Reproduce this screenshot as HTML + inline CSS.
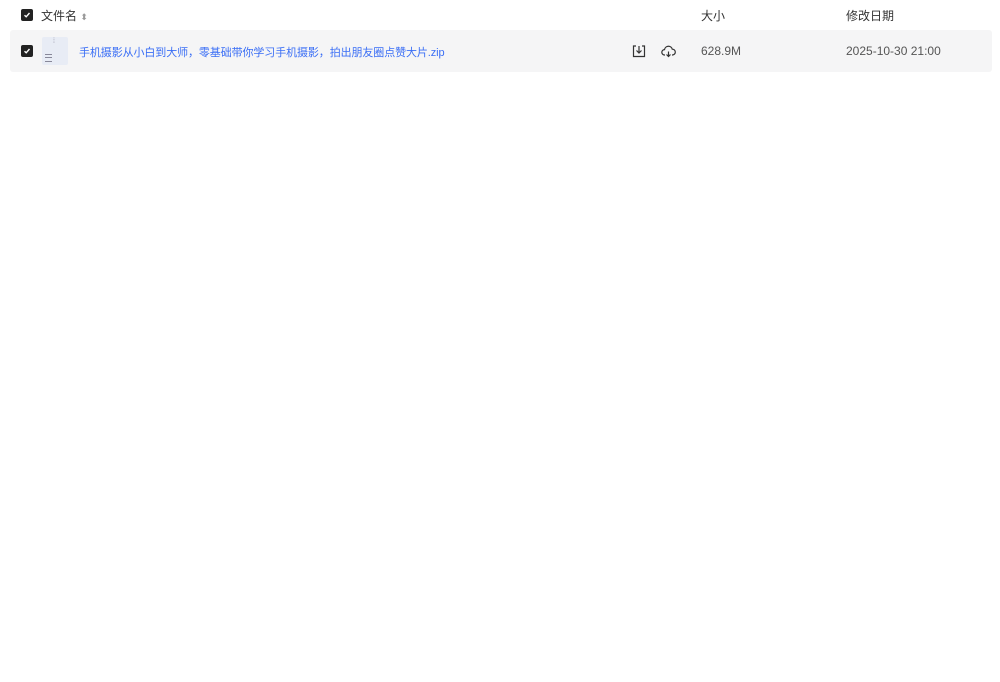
<!DOCTYPE html>
<html><head><meta charset="utf-8"><style>
body{margin:0;width:1000px;height:682px;background:#fff;font-family:"Liberation Sans","Noto Sans CJK SC",sans-serif;font-size:12px;color:#333;position:relative;overflow:hidden}
.a{position:absolute}
.cb{width:12px;height:12px;background:#222;border-radius:2px;display:flex;align-items:center;justify-content:center}
</style></head><body>
<div class="a cb" style="left:21px;top:9px"><svg width="8" height="8" viewBox="0 0 8 8"><path d="M1.5 4.2L3.2 5.8L6.5 2" stroke="#fff" stroke-width="1.4" fill="none"/></svg></div>
<div class="a" style="left:41px;top:7px;color:#333">文件名 <span style="font-size:9px;color:#999">⬍</span></div>
<div class="a" style="left:701px;top:7px">大小</div>
<div class="a" style="left:846px;top:7px">修改日期</div>
<div class="a" style="left:10px;top:30px;width:982px;height:42px;background:#f5f5f6;border-radius:3px"></div>
<div class="a cb" style="left:21px;top:45px"><svg width="8" height="8" viewBox="0 0 8 8"><path d="M1.5 4.2L3.2 5.8L6.5 2" stroke="#fff" stroke-width="1.4" fill="none"/></svg></div>
<div class="a" style="left:42px;top:37px;width:26px;height:28px;background:#e8ecf5;border-radius:2px"></div>
<div class="a" style="left:53px;top:38px;font-size:7px;color:#99a">⁞</div>
<div class="a" style="left:45px;top:54px;width:7px;height:6px;border-top:1px solid #889;border-bottom:1px solid #889"><div style="margin-top:2px;border-top:1px solid #889"></div></div>
<div class="a" style="left:79px;top:44px;font-size:11px;color:#3a6ef5;letter-spacing:-0.1px">手机摄影从小白到大师，零基础带你学习手机摄影，拍出朋友圈点赞大片.zip</div>
<svg class="a" style="left:632px;top:44px" width="14" height="14" viewBox="0 0 14 14"><path d="M4 2H1.5V12.5H12.5V2H10" stroke="#333" stroke-width="1.2" fill="none"/><path d="M7 2V9M4.5 6.5L7 9L9.5 6.5" stroke="#333" stroke-width="1.2" fill="none"/></svg>
<svg class="a" style="left:661px;top:44px" width="15" height="14" viewBox="0 0 15 14"><path d="M4 11H3.5A2.7 2.7 0 0 1 3.5 5.6A4 4 0 0 1 11.3 5.2A2.9 2.9 0 0 1 11.5 11H11" stroke="#333" stroke-width="1.2" fill="none"/><path d="M5.5 9.5L7.5 7.5L9.5 9.5M7.5 7.5V12.5" stroke="#333" stroke-width="1.2" fill="none" transform="rotate(180 7.5 10)"/></svg>
<div class="a" style="left:701px;top:44px;color:#555">628.9M</div>
<div class="a" style="left:846px;top:44px;color:#555">2025-10-30 21:00</div>
</body></html>
